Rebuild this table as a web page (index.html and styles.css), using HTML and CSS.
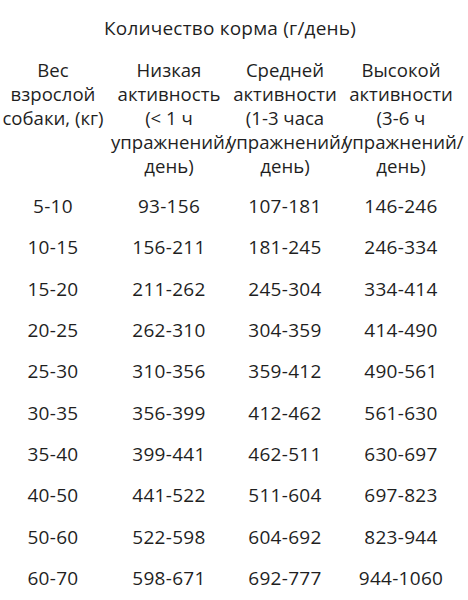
FILE: index.html
```html
<!DOCTYPE html>
<html lang="ru">
<head>
<meta charset="utf-8">
<link rel="stylesheet" href="styles.css">
</head>
<body>
<div class="page">
  <div class="title">Количество корма (г/день)</div>
  <div class="table">
    <div class="head">Вес взрослой собаки, (кг)</div>
    <div class="head">Низкая активность (&lt; 1 ч упражнений/ день)</div>
    <div class="head">Средней активности (1-3 часа упражнений/ день)</div>
    <div class="head">Высокой активности (3-6 ч упражнений/ день)</div>

    <div class="cell">5-10</div><div class="cell">93-156</div><div class="cell">107-181</div><div class="cell">146-246</div>
    <div class="cell">10-15</div><div class="cell">156-211</div><div class="cell">181-245</div><div class="cell">246-334</div>
    <div class="cell">15-20</div><div class="cell">211-262</div><div class="cell">245-304</div><div class="cell">334-414</div>
    <div class="cell">20-25</div><div class="cell">262-310</div><div class="cell">304-359</div><div class="cell">414-490</div>
    <div class="cell">25-30</div><div class="cell">310-356</div><div class="cell">359-412</div><div class="cell">490-561</div>
    <div class="cell">30-35</div><div class="cell">356-399</div><div class="cell">412-462</div><div class="cell">561-630</div>
    <div class="cell">35-40</div><div class="cell">399-441</div><div class="cell">462-511</div><div class="cell">630-697</div>
    <div class="cell">40-50</div><div class="cell">441-522</div><div class="cell">511-604</div><div class="cell">697-823</div>
    <div class="cell">50-60</div><div class="cell">522-598</div><div class="cell">604-692</div><div class="cell">823-944</div>
    <div class="cell">60-70</div><div class="cell">598-671</div><div class="cell">692-777</div><div class="cell">944-1060</div>
  </div>
</div>
</body>
</html>
```
FILE: styles.css
```css
html, body {
  margin: 0;
  padding: 0;
  background: #ffffff;
}
body {
  font-family: "Open Sans", "Noto Sans", sans-serif;
  color: #1f1f1f;
  font-size: 19px;
  overflow: hidden;
}
.page {
  padding-top: 16px;
}
.title {
  text-align: center;
  line-height: 24px;
  letter-spacing: 0.2px;
  padding-right: 8px;
  margin-bottom: 18px;
}
.table {
  display: grid;
  grid-template-columns: repeat(4, 116px);
  margin-left: -5px;
}
.head {
  text-align: center;
  font-size: 18.6px;
  line-height: 24px;
  margin-bottom: 8px;
}
.cell {
  text-align: center;
  letter-spacing: 0.3px;
  line-height: 41.35px;
}
```
